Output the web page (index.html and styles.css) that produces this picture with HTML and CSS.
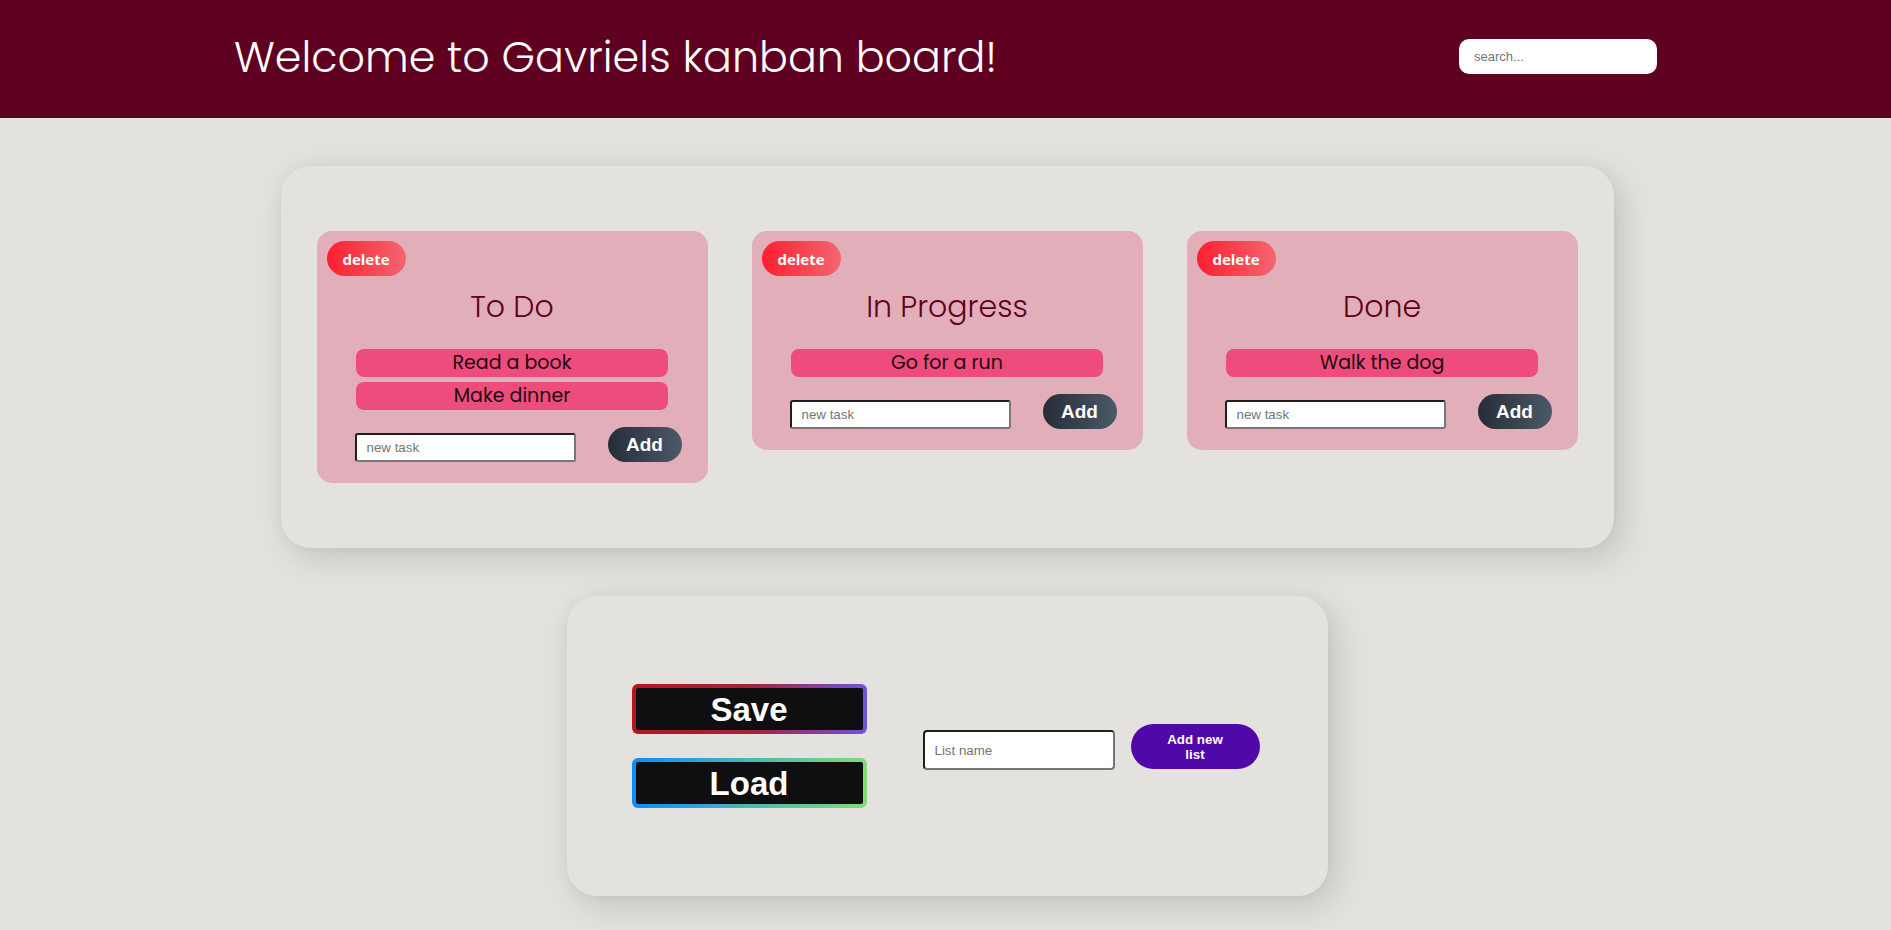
FILE: index.html
```html
<!DOCTYPE html>
<html lang="en">
<head>
<meta charset="utf-8">
<title>Gavriels kanban board</title>
<link rel="stylesheet" href="styles.css">
</head>
<body>
<header class="topbar">
  <h1 class="site-title">Welcome to Gavriels kanban board!</h1>
  <input class="search" type="text" placeholder="search...">
</header>
<main class="page">
  <section class="board">
    <div class="list">
      <button class="delete-btn">delete</button>
      <h2 class="list-title">To Do</h2>
      <div class="tasks">
        <div class="task">Read a book</div>
        <div class="task">Make dinner</div>
      </div>
      <div class="add-row">
        <input class="task-input" type="text" placeholder="new task">
        <button class="add-btn">Add</button>
      </div>
    </div>
    <div class="list">
      <button class="delete-btn">delete</button>
      <h2 class="list-title">In Progress</h2>
      <div class="tasks">
        <div class="task">Go for a run</div>
      </div>
      <div class="add-row">
        <input class="task-input" type="text" placeholder="new task">
        <button class="add-btn">Add</button>
      </div>
    </div>
    <div class="list">
      <button class="delete-btn">delete</button>
      <h2 class="list-title">Done</h2>
      <div class="tasks">
        <div class="task">Walk the dog</div>
      </div>
      <div class="add-row">
        <input class="task-input" type="text" placeholder="new task">
        <button class="add-btn">Add</button>
      </div>
    </div>
  </section>
  <section class="controls">
    <div class="storage">
      <button class="glow-btn save">Save</button>
      <button class="glow-btn load">Load</button>
    </div>
    <div class="new-list">
      <input class="list-input" type="text" placeholder="List name">
      <button class="new-list-btn">Add new list</button>
    </div>
  </section>
</main>
</body>
</html>
```
FILE: styles.css
```css
* { box-sizing: border-box; }

body {
  margin: 0;
  background: #e2e1dd;
  font-family: "Poppins", "Open Sans", sans-serif;
}

.topbar {
  height: 118px;
  background: #5f0020;
  padding: 0 234px;
  display: flex;
  align-items: center;
  justify-content: space-between;
}

.site-title {
  margin: 0 0 2px;
  color: #ffffff;
  font-family: "Poppins", "Open Sans", sans-serif;
  font-weight: 300;
  font-size: 42.8px;
  line-height: 1.2;
}

.search {
  width: 198px;
  height: 35px;
  margin-bottom: 5px;
  border: none;
  border-radius: 10px;
  background: #fff;
  padding: 0 15px;
  font-family: "Liberation Sans", Arial, sans-serif;
  font-size: 13px;
  outline: none;
}
.search::placeholder { color: #757575; }

.page {
  display: flex;
  flex-direction: column;
  align-items: center;
  gap: 48px;
  padding: 48px 0 33px 3px;
}

.board {
  width: 1333px;
  padding: 65px 36px;
  display: flex;
  align-items: flex-start;
  gap: 44px;
  background: #e3e2de;
  border-radius: 30px;
  box-shadow: 8px 10px 32px rgba(0, 0, 0, 0.13), 0 0 16px rgba(0, 0, 0, 0.04);
}

.list {
  width: 391px;
  flex: none;
  background: #e1aeba;
  border-radius: 15px;
  padding: 10px 0 21px;
  display: flex;
  flex-direction: column;
}

.delete-btn {
  align-self: flex-start;
  margin-left: 10px;
  width: 79px;
  height: 35px;
  border: none;
  border-radius: 18px;
  background: linear-gradient(to right, #ff1f2f, #f26670);
  color: #fff;
  font-family: "Open Sans", sans-serif;
  font-weight: 700;
  font-size: 15px;
  padding: 0;
}

.list-title {
  margin: 13px 0 24px;
  text-align: center;
  color: #5f0020;
  font-family: "Poppins", "Open Sans", sans-serif;
  font-weight: 300;
  font-size: 30px;
  line-height: 36px;
}

.tasks {
  display: flex;
  flex-direction: column;
  align-items: center;
  gap: 5px;
}

.task {
  width: 312px;
  height: 28px;
  background: #ee4c7c;
  border-radius: 8px;
  text-align: center;
  color: #1c0a10;
  font-family: "Poppins", "Open Sans", sans-serif;
  font-size: 19px;
  line-height: 28px;
}

.add-row {
  margin-top: 17px;
  padding-left: 38px;
  display: flex;
  align-items: flex-end;
  gap: 32px;
}

.task-input {
  width: 221px;
  height: 29px;
  border: 2px solid;
  border-color: #1f1f1f #767676 #767676 #1f1f1f;
  border-radius: 3px;
  background: #fff;
  padding: 0 10px;
  font-family: "Liberation Sans", Arial, sans-serif;
  font-size: 13.33px;
}
.task-input::placeholder, .list-input::placeholder { color: #757575; }

.add-btn {
  width: 74px;
  height: 35px;
  border: none;
  border-radius: 18px;
  background: linear-gradient(to right, #262d38, #4b5967);
  color: #fff;
  font-family: "Liberation Sans", Arial, sans-serif;
  font-weight: 700;
  font-size: 19px;
  padding: 0;
}

.controls {
  width: 761px;
  height: 300px;
  padding: 0 68px 0 65px;
  display: flex;
  align-items: center;
  background: #e3e2de;
  border-radius: 30px;
  box-shadow: 8px 10px 32px rgba(0, 0, 0, 0.13), 0 0 16px rgba(0, 0, 0, 0.04);
}

.storage {
  display: flex;
  flex-direction: column;
  gap: 24px;
}

.glow-btn {
  width: 235px;
  height: 50px;
  border: 4px solid transparent;
  border-radius: 6px;
  color: #fff;
  font-family: "Liberation Sans", Arial, sans-serif;
  font-weight: 700;
  font-size: 33px;
  padding: 0;
  line-height: 1;
}
.save {
  background: linear-gradient(#0f0f11, #0f0f11) padding-box,
              linear-gradient(to right, #b5171d 0%, #a8203a 50%, #6c55dd 100%) border-box;
}
.load {
  background: linear-gradient(#0f0f11, #0f0f11) padding-box,
              linear-gradient(to right, #0a8cff 0%, #4ab8b0 50%, #84d978 100%) border-box;
}

.new-list {
  margin-left: 56px;
  margin-top: 8px;
  display: flex;
  align-items: center;
  gap: 16px;
}

.list-input {
  width: 192px;
  height: 40px;
  border: 2px solid;
  border-color: #1f1f1f #767676 #767676 #1f1f1f;
  border-radius: 4px;
  background: #fff;
  padding: 0 10px;
  font-family: "Liberation Sans", Arial, sans-serif;
  font-size: 13.33px;
}

.new-list-btn {
  width: 129px;
  height: 45px;
  border: none;
  border-radius: 23px;
  background: #5108a8;
  color: #fff;
  font-family: "Liberation Sans", Arial, sans-serif;
  font-weight: 700;
  font-size: 13.33px;
  line-height: 15px;
  padding: 0 30px;
  margin-top: -7px;
}
```
